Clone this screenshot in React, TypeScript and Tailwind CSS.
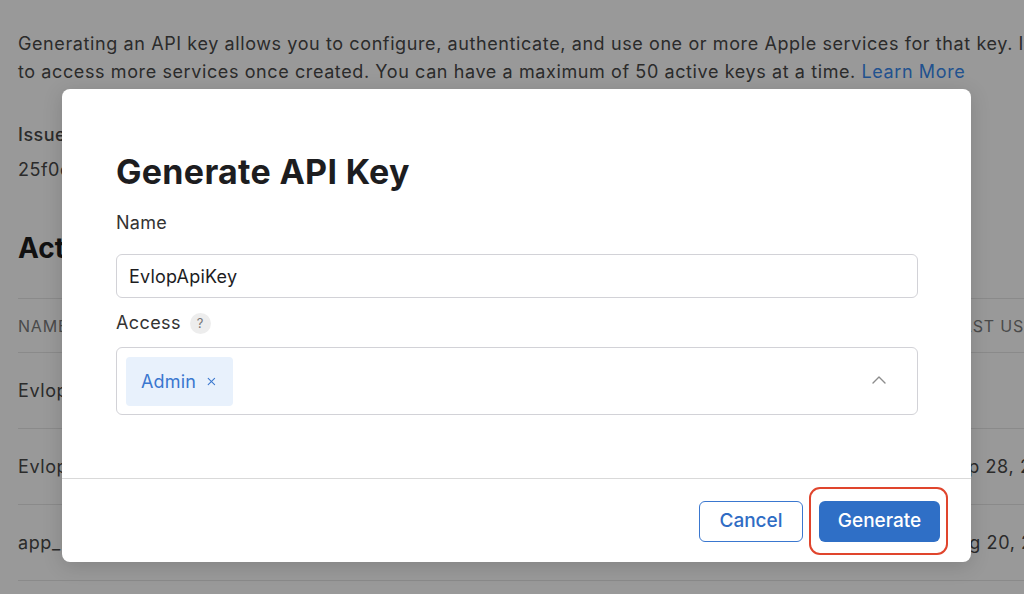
import { X } from "lucide-react";

const font = { fontFamily: "Inter, 'Noto Sans', sans-serif" };

function BackgroundPage() {
  const rows = [
    { name: "EvlopApiKey2", access: "Admin", date: "Oct 02, 2023", used: "" },
    { name: "EvlopKey", access: "Admin", date: "Sep 28, 2023", used: "Sep 28, 2023" },
    { name: "app_key_prod", access: "Developer", date: "Aug 20, 2023", used: "Aug 20, 2023" },
  ];
  return (
    <div className="w-[1400px] px-[18px] pt-[30px] text-[#2b2b2b]">
      <p className="text-[18px] leading-[28px] tracking-[0.6px] whitespace-nowrap">
        Generating an API key allows you to configure, authenticate, and use one or more Apple services for that key. It can be edited
        <br />
        to access more services once created. You can have a maximum of 50 active keys at a time.{" "}
        <span className="text-[#22528f]">Learn More</span>
      </p>

      <div className="mt-[37px] text-[18px] leading-[24px] tracking-[0.5px] font-medium">Issuer ID</div>
      <div className="mt-[11px] text-[18px] leading-[24px] tracking-[0.5px]">25f0c1a2-7d4e-4b8a-9f3c-1e6d2a8b5c47</div>

      <h2 className="mt-[49px] text-[28px] leading-[34px] font-bold text-[#111]">Active Keys (3)</h2>

      <div className="mt-[33px] w-[1200px] border-t border-[#8a8a8a]">
        <div className="grid grid-cols-[300px_300px_333px_1fr] h-[54px] items-center border-b border-[#8a8a8a] text-[16px] tracking-[0.8px] text-[#4a4a4a]">
          <span>NAME</span>
          <span>ACCESS</span>
          <span>KEY ID</span>
          <span>LAST USED</span>
        </div>
        {rows.map((r) => (
          <div
            key={r.name}
            className="grid grid-cols-[300px_300px_327px_1fr] h-[76px] items-center border-b border-[#8a8a8a] text-[18px] tracking-[0.6px]"
          >
            <span>{r.name}</span>
            <span>{r.access}</span>
            <span>{r.date}</span>
            <span>{r.used}</span>
          </div>
        ))}
      </div>
    </div>
  );
}

function Modal() {
  return (
    <div className="absolute left-[62px] top-[89px] w-[909px] h-[473px] bg-white rounded-[8px] shadow-[0_4px_20px_rgba(0,0,0,0.15)] flex flex-col">
      <div className="flex-1 pl-[54px] pr-[53px] pt-[63px]">
        <h1 className="text-[34px] leading-[40px] font-bold tracking-[0.3px] text-[#1d1d1f]">Generate API Key</h1>

        <label className="block mt-[19px] text-[18px] leading-[24px] tracking-[0.3px] text-[#333]">Name</label>
        <div className="mt-[19px] h-[44px] border border-[#d2d2d7] rounded-[6px] flex items-center px-[12px] text-[18px] tracking-[0.2px] text-[#1d1d1f]">
          EvlopApiKey
        </div>

        <div className="mt-[13px] flex items-center gap-[9px] text-[18px] leading-[24px] tracking-[0.4px] text-[#333]">
          <span>Access</span>
          <span className="w-[21px] h-[21px] rounded-full bg-[#ededed] text-[#777] text-[13px] flex items-center justify-center">
            ?
          </span>
        </div>
        <div className="mt-[12px] h-[68px] border border-[#d2d2d7] rounded-[6px] flex items-center justify-between pl-[9px] pr-[31px]">
          <span className="h-[49px] w-[107px] px-[15px] rounded-[4px] bg-[#e8f1fc] text-[#3a77cf] text-[18px] tracking-[0.2px] flex items-center gap-[9px]">
            Admin
            <X className="w-[13px] h-[13px]" strokeWidth={2} />
          </span>
          <svg width="14" height="8" viewBox="0 0 14 8" fill="none" className="mb-[2px]">
            <polyline points="1,7 7,1 13,7" stroke="#8c8c8c" strokeWidth="1.4" strokeLinecap="round" strokeLinejoin="round" />
          </svg>
        </div>
      </div>

      <div className="h-[84px] border-t border-[#d9d9d9] flex items-center justify-end gap-[16px] pr-[31px]">
        <button className="h-[41px] w-[104px] rounded-[6px] border border-[#3a77cf] text-[#2f6cc4] text-[19px] font-medium mt-[1px]">
          Cancel
        </button>
        <div className="relative mt-[1px]">
          <button className="h-[41px] w-[121px] rounded-[6px] bg-[#2f6fc6] text-white text-[19px] font-medium">
            Generate
          </button>
          <div className="absolute -left-[10px] -right-[8px] -top-[14px] -bottom-[13px] border-2 border-[#e0452d] rounded-[11px] pointer-events-none" />
        </div>
      </div>
    </div>
  );
}

export default function App() {
  return (
    <div className="relative w-full h-[594px] overflow-hidden bg-[#999999]" style={font}>
      <BackgroundPage />
      <Modal />
    </div>
  );
}
